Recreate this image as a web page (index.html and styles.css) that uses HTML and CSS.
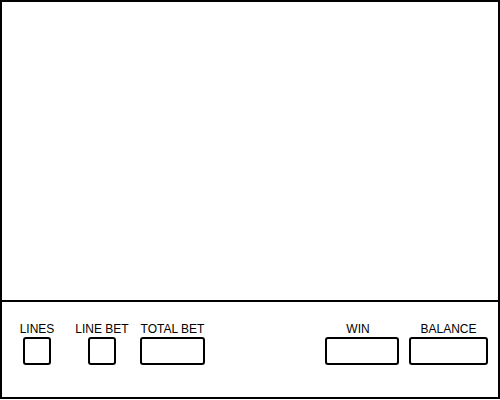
FILE: index.html
```html
<!DOCTYPE html>
<html>
<head>
<meta charset="utf-8">
<link rel="stylesheet" href="styles.css">
</head>
<body>
<div class="frame">
  <div class="stage"></div>
  <div class="panel">
    <div class="group">
      <div class="field field-lines">
        <div class="label">LINES</div>
        <div class="box"></div>
      </div>
      <div class="field field-linebet">
        <div class="label">LINE BET</div>
        <div class="box"></div>
      </div>
      <div class="field field-total">
        <div class="label">TOTAL BET</div>
        <div class="box"></div>
      </div>
    </div>
    <div class="group group-right">
      <div class="field field-win">
        <div class="label label-win">WIN</div>
        <div class="box"></div>
      </div>
      <div class="field field-balance">
        <div class="label">BALANCE</div>
        <div class="box"></div>
      </div>
    </div>
  </div>
</div>
</body>
</html>
```

FILE: styles.css
```css
html, body {
  margin: 0;
  padding: 0;
  background: #fff;
}
.frame {
  width: 500px;
  height: 399px;
  box-sizing: border-box;
  border: 2px solid #000;
  display: flex;
  flex-direction: column;
  font-family: "Liberation Sans", Arial, sans-serif;
  font-size: 12px;
  color: #000;
}
.stage {
  height: 298px;
  flex: none;
}
.panel {
  flex: 1;
  border-top: 2px solid #000;
  display: flex;
  padding: 20px 10px 0 21px;
}
.group {
  display: flex;
  align-items: flex-start;
}
.group-right {
  margin-left: auto;
  gap: 10px;
}
.field {
  flex: none;
  display: flex;
  flex-direction: column;
  align-items: center;
}
.field-lines { width: 28px; }
.field-linebet { width: 28px; margin-left: 37px; }
.field-total { width: 65px; margin-left: 24px; }
.field-win { width: 74px; }
.field-balance { width: 79px; }
.label {
  line-height: 14px;
  height: 14px;
  white-space: nowrap;
}
.label-win {
  margin-right: 8px;
}
.box {
  align-self: stretch;
  margin-top: 1px;
  height: 28px;
  box-sizing: border-box;
  border: 2px solid #000;
  border-radius: 3px;
}
```
